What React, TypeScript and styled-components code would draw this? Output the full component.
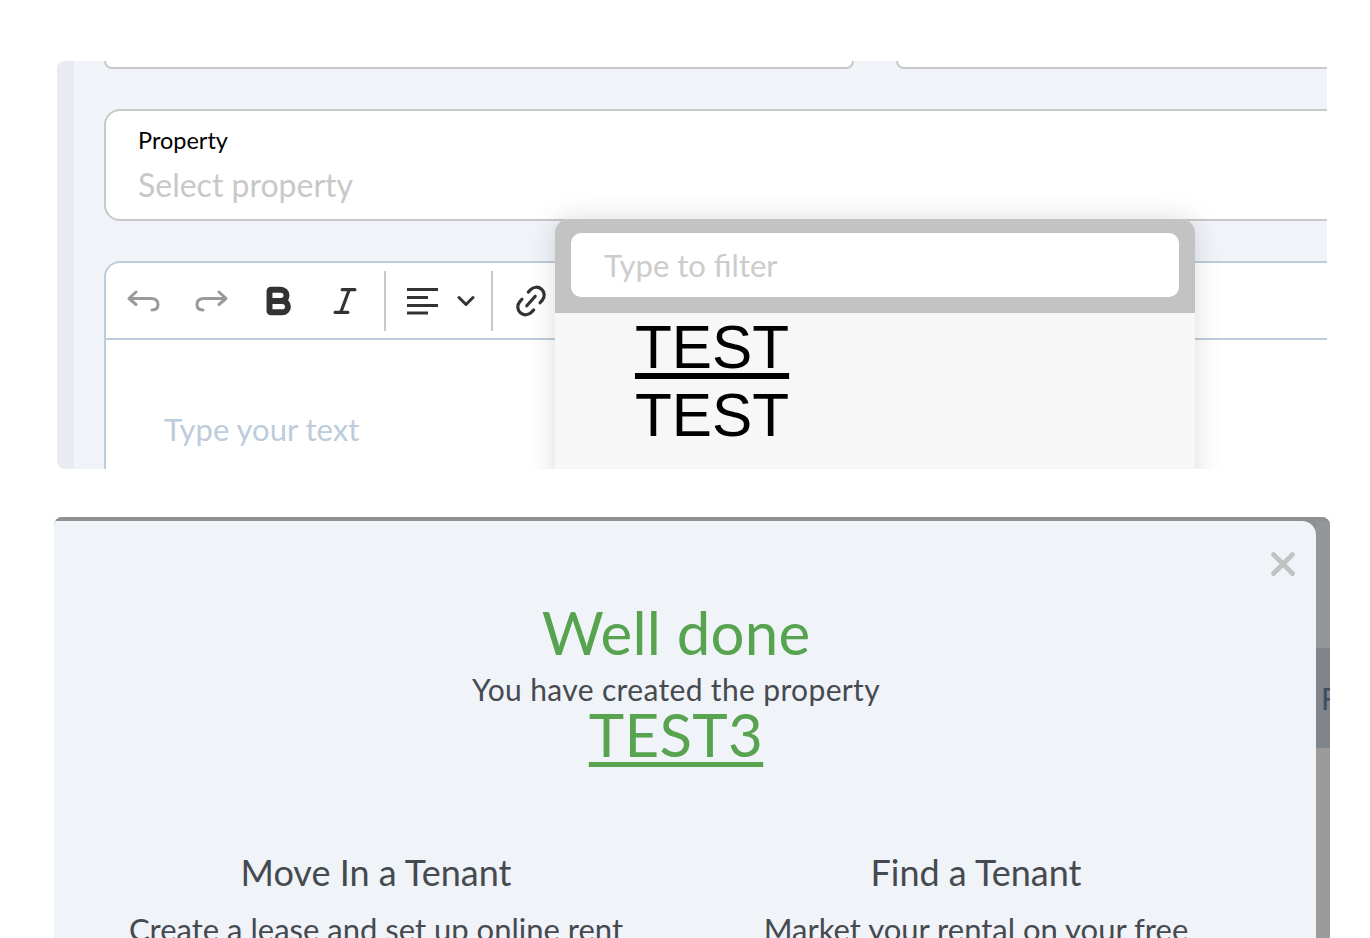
import React from 'react';
import styled, { createGlobalStyle } from 'styled-components';
import { Bold, Italic, Link2, X } from 'lucide-react';

const GlobalStyle = createGlobalStyle`
  html, body {
    margin: 0;
    height: 938px;
    overflow: hidden;
    background: #ffffff;
  }
  * {
    box-sizing: border-box;
  }
`;

const App: React.FC = () => {
  return (
    <Page>
      <GlobalStyle />
      <FormShot>
        <SideStrip />
        <Form>
          <StubRow>
            <StubField />
            <StubField />
          </StubRow>
          <PropertyField>
            <FieldLabel>Property</FieldLabel>
            <FieldPlaceholder>Select property</FieldPlaceholder>
          </PropertyField>
          <Editor>
            <Toolbar>
              <ToolButton>
                <svg width="34" height="26" viewBox="0 0 34 26" fill="none" stroke="#9a9a9a" strokeWidth="3" strokeLinecap="round" strokeLinejoin="round">
                  <path d="M9 4 2 10.500 9 16.500" />
                  <path d="M2.500 10.500H24C29 10.500 31 13 31 16.500C31 20 29 22 25 22" />
                </svg>
              </ToolButton>
              <ToolButton>
                <svg width="34" height="26" viewBox="0 0 34 26" fill="none" stroke="#9a9a9a" strokeWidth="3" strokeLinecap="round" strokeLinejoin="round">
                  <path d="M25 4 32 10.500 25 16.500" />
                  <path d="M31.500 10.500H10C5 10.500 3 13 3 16.500C3 20 5 22 9 22" />
                </svg>
              </ToolButton>
              <ToolButton>
                <Bold size={34} color="#333333" strokeWidth={4.2} />
              </ToolButton>
              <ToolButton>
                <Italic size={34} color="#333333" strokeWidth={2.2} />
              </ToolButton>
              <ToolDivider />
              <AlignButton>
                <svg width="34" height="28" viewBox="0 0 34 28" fill="none" stroke="#333333" strokeWidth="3">
                  <path d="M1 2.500H32" />
                  <path d="M1 10.500H22" />
                  <path d="M1 18.500H32" />
                  <path d="M1 26H22" />
                </svg>
                <svg width="18" height="12" viewBox="0 0 18 12" fill="none" stroke="#333333" strokeWidth="3" strokeLinecap="round" strokeLinejoin="round">
                  <path d="M2 2.500 9 9.500 16 2.500" />
                </svg>
              </AlignButton>
              <ToolDivider />
              <LinkButton>
                <Link2 size={38} color="#333333" strokeWidth={2} />
              </LinkButton>
            </Toolbar>
            <EditorPlaceholder>Type your text</EditorPlaceholder>
          </Editor>
        </Form>
        <Dropdown>
          <FilterBar>
            <FilterInput>Type to filter</FilterInput>
          </FilterBar>
          <OptionList>
            <Option underlined>TEST</Option>
            <Option>TEST</Option>
          </OptionList>
        </Dropdown>
      </FormShot>
      <ModalShot>
        <Modal>
          <CloseButton>
            <X size={38} color="#c2c2c2" strokeWidth={3} />
          </CloseButton>
          <Title>Well done</Title>
          <Subtitle>You have created the property</Subtitle>
          <PropertyLink>TEST3</PropertyLink>
          <Columns>
            <Column>
              <ColumnTitle>Move In a Tenant</ColumnTitle>
              <ColumnText>Create a lease and set up online rent</ColumnText>
            </Column>
            <Column>
              <ColumnTitle>Find a Tenant</ColumnTitle>
              <ColumnText>Market your rental on your free</ColumnText>
            </Column>
          </Columns>
        </Modal>
        <Backdrop>
          <BackdropTop />
          <BackdropRow>F</BackdropRow>
          <BackdropBottom />
        </Backdrop>
      </ModalShot>
    </Page>
  );
};

const Page = styled.div`
  display: flex;
  flex-direction: column;
  height: 938px;
  padding-top: 61px;
  overflow: hidden;
  font-family: Lato, 'Noto Sans', sans-serif;
`;

const FormShot = styled.div`
  position: relative;
  display: flex;
  flex: none;
  width: 1270px;
  height: 408px;
  margin-left: 57px;
  overflow: hidden;
  border-radius: 8px 0 0 8px;
  background-color: #f0f3f8;
`;

const SideStrip = styled.div`
  flex: none;
  width: 17px;
  background-color: #e8ecf1;
`;

const Form = styled.div`
  flex: none;
  display: flex;
  flex-direction: column;
  width: 1300px;
  padding-left: 30px;
`;

const StubRow = styled.div`
  display: grid;
  grid-template-columns: 750px 1fr;
  gap: 42px;
  height: 8px;
`;

const StubField = styled.div`
  border: 2px solid #c8c8c8;
  border-top: none;
  border-radius: 0 0 16px 16px;
  background-color: #ffffff;
`;

const PropertyField = styled.div`
  height: 112px;
  margin-top: 40px;
  padding: 15px 32px 0;
  border: 2px solid #c8c8c8;
  border-radius: 16px;
  background-color: #ffffff;
`;

const FieldLabel = styled.div`
  font-size: 23.5px;
  line-height: 28px;
  color: #000000;
`;

const FieldPlaceholder = styled.div`
  margin-top: 14px;
  font-size: 32px;
  line-height: 34px;
  color: #c8c8c8;
`;

const Editor = styled.div`
  flex: 1;
  margin-top: 40px;
  border: 2px solid #bdccdb;
  border-bottom: none;
  border-radius: 16px 16px 0 0;
  background-color: #ffffff;
`;

const Toolbar = styled.div`
  display: flex;
  align-items: center;
  height: 77px;
  padding-left: 1px;
  border-bottom: 2px solid #bdccdb;
`;

const ToolButton = styled.div`
  display: flex;
  align-items: center;
  justify-content: center;
  width: 67px;
  height: 60px;
  margin-left: 3px;
  margin-right: -3px;
`;

const ToolDivider = styled.div`
  flex: none;
  width: 2px;
  height: 60px;
  margin-left: 9px;
  background-color: #c8c8c8;
`;

const AlignButton = styled.div`
  display: flex;
  flex: none;
  align-items: center;
  gap: 17px;
  width: 96px;
  padding-left: 20px;
`;

const LinkButton = styled.div`
  display: flex;
  padding-left: 19px;

  svg {
    transform: rotate(-48deg);
  }
`;

const EditorPlaceholder = styled.div`
  margin-top: 71px;
  padding-left: 58px;
  font-size: 31px;
  line-height: 36px;
  color: #bdccdb;
`;

const Dropdown = styled.div`
  position: absolute;
  top: 158px;
  left: 498px;
  width: 640px;
  height: 300px;
  border-radius: 14px 14px 0 0;
  background-color: #f7f7f7;
  box-shadow: 0 0 28px rgba(0, 0, 0, 0.14);
`;

const FilterBar = styled.div`
  height: 94px;
  padding: 14px 16px 0;
  border-radius: 14px 14px 0 0;
  background-color: #c3c3c3;
`;

const FilterInput = styled.div`
  height: 64px;
  padding-left: 33px;
  border-radius: 10px;
  font-size: 31px;
  line-height: 64px;
  color: #cccccc;
  background-color: #ffffff;
`;

const OptionList = styled.div`
  padding: 0 0 0 80px;
`;

const Option = styled.div<{ underlined?: boolean }>`
  font-family: 'Liberation Sans', Arial, sans-serif;
  font-size: 60.300px;
  line-height: 68px;
  color: #000000;
  text-decoration: ${(props) => (props.underlined ? 'underline' : 'none')};
  text-decoration-thickness: 6px;
  text-underline-offset: 5px;
`;

const ModalShot = styled.div`
  display: flex;
  flex: none;
  width: 1276px;
  height: 421px;
  margin-top: 48px;
  margin-left: 54px;
  padding-top: 4px;
  overflow: hidden;
  border-radius: 8px 8px 0 0;
  background-color: #8f9092;
`;

const Modal = styled.div`
  position: relative;
  flex: none;
  width: 1262px;
  padding: 71px 40px 0 22px;
  border-radius: 0 14px 0 0;
  text-align: center;
  background-color: #f0f3f8;
`;

const CloseButton = styled.div`
  position: absolute;
  top: 24px;
  right: 14px;
  display: flex;
`;

const Title = styled.div`
  font-size: 60px;
  font-weight: 400;
  line-height: 80px;
  letter-spacing: 0.2px;
  color: #57a350;
`;

const Subtitle = styled.div`
  font-size: 30px;
  line-height: 34px;
  letter-spacing: 0.35px;
  color: #454a50;
`;

const PropertyLink = styled.div`
  font-size: 60px;
  font-weight: 400;
  line-height: 56px;
  letter-spacing: 0.3px;
  color: #57a350;
  text-decoration: underline;
  text-decoration-thickness: 5px;
  text-underline-offset: 5px;
`;

const Columns = styled.div`
  display: grid;
  grid-template-columns: 1fr 1fr;
  margin-top: 90px;
`;

const Column = styled.div`
  display: flex;
  flex-direction: column;
  gap: 19px;
`;

const ColumnTitle = styled.div`
  font-size: 36px;
  line-height: 40px;
  color: #454a50;
`;

const ColumnText = styled.div`
  font-size: 31px;
  line-height: 36px;
  color: #454a50;
`;

const Backdrop = styled.div`
  display: flex;
  flex-direction: column;
  flex: 1;
  overflow: hidden;
`;

const BackdropTop = styled.div`
  flex: none;
  height: 127px;
  background-color: #949597;
`;

const BackdropRow = styled.div`
  flex: none;
  height: 100px;
  padding-left: 5px;
  font-size: 30px;
  line-height: 100px;
  color: #3f4d5e;
  background-color: #7f858b;
`;

const BackdropBottom = styled.div`
  flex: 1;
  background-color: #9b9b9b;
`;

export default App;
